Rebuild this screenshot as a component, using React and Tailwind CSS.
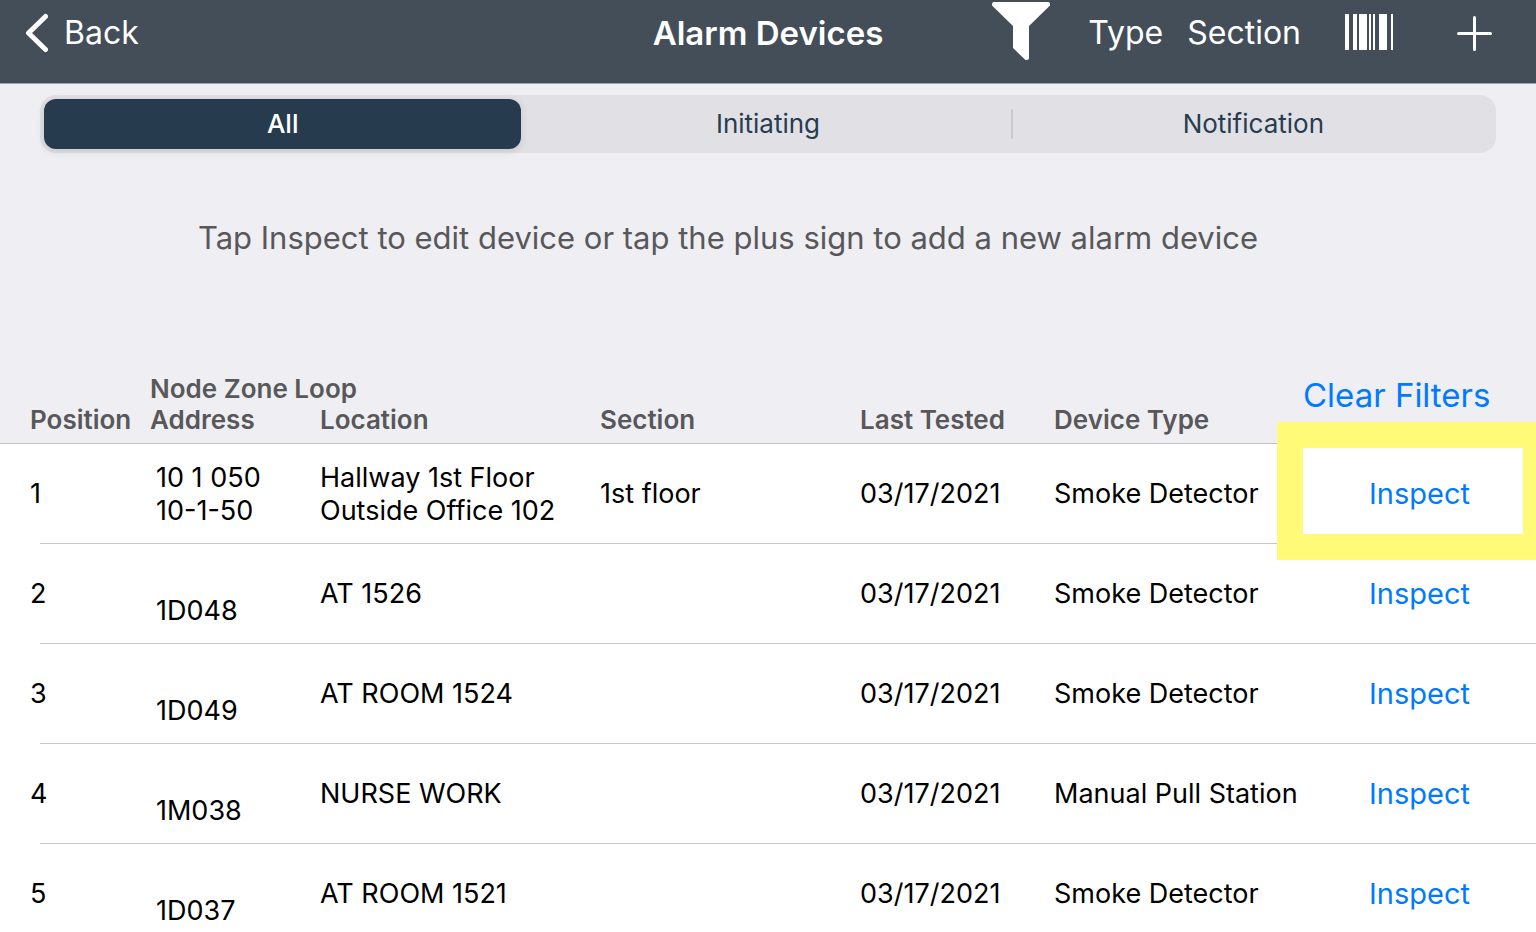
import { useState } from 'react';

const SEGMENTS = ['All', 'Initiating', 'Notification'];

const DEVICES = [
  {
    position: 1,
    node: '10 1 050',
    address: '10-1-50',
    location: 'Hallway 1st Floor Outside Office 102',
    section: '1st floor',
    lastTested: '03/17/2021',
    type: 'Smoke Detector',
    highlighted: true,
  },
  { position: 2, address: '1D048', location: 'AT 1526', lastTested: '03/17/2021', type: 'Smoke Detector' },
  { position: 3, address: '1D049', location: 'AT ROOM 1524', lastTested: '03/17/2021', type: 'Smoke Detector' },
  { position: 4, address: '1M038', location: 'NURSE WORK', lastTested: '03/17/2021', type: 'Manual Pull Station' },
  { position: 5, address: '1D037', location: 'AT ROOM 1521', lastTested: '03/17/2021', type: 'Smoke Detector' },
];

function NavBar() {
  return (
    <header className="grid grid-cols-[1fr_auto_1fr] items-center h-[84px] pb-[17px] bg-[#434e59] border-b border-[#a1a6ad] text-white text-[32px] leading-10">
      <button type="button" className="flex items-center gap-4 pl-6 justify-self-start">
        <svg width="24" height="40" viewBox="0 0 24 40" fill="none" stroke="currentColor" strokeWidth="5" strokeLinecap="round" strokeLinejoin="round">
          <path d="M21.5 3.5 4.5 20 21.5 36.5" />
        </svg>
        Back
      </button>
      <h1 className="text-[33px] font-semibold">Alarm Devices</h1>
      <div className="flex items-center justify-end pr-11">
        <button type="button" aria-label="Filter" className="mr-[38px]">
          <svg width="58" height="62" viewBox="0 0 58 62" fill="currentColor">
            <path d="M2 0H56Q58 0 58 2V3.5L37 24V56Q37 58 35 58H33.5L21 46V24L0 3.5V2Q0 0 2 0Z" />
          </svg>
        </button>
        <button type="button" className="mr-6">Type</button>
        <button type="button" className="mr-11">Section</button>
        <button type="button" aria-label="Scan barcode" className="mr-16">
          <svg width="48" height="38" viewBox="0 0 48 38" fill="currentColor">
            <path d="M0 0h4v36H0zM8 0h4v36H8zM14 0h8v36h-8zM24 0h2v36h-2zM28 0h2v36h-2zM34 0h8v36h-8zM46 0h2v36h-2z" />
          </svg>
        </button>
        <button type="button" aria-label="Add device">
          <svg width="35" height="35" viewBox="0 0 35 35" fill="none" stroke="currentColor" strokeWidth="3" strokeLinecap="round">
            <path d="M17.5 1.5v32M1.5 17.5h32" />
          </svg>
        </button>
      </div>
    </header>
  );
}

function SegmentedControl({ active, onChange }) {
  return (
    <div className="grid grid-cols-3 mx-10 mt-[11px] py-1 rounded-2xl bg-[#e1e0e5] text-[26px] leading-[50px] text-[#283c50]">
      {SEGMENTS.map((name) => (
        <div key={name} className="flex items-center">
          {name === 'Notification' && <span className="w-0.5 h-[30px] -mr-0.5 rounded-full bg-[#cac9cf]" />}
          <button
            type="button"
            aria-pressed={active === name}
            onClick={() => onChange(name)}
            className={
              active === name
                ? 'flex-1 mx-1 rounded-xl bg-[#273b4f] text-white font-medium shadow-[0_2px_8px_rgba(0,0,0,0.12)]'
                : 'flex-1 mx-1 rounded-xl'
            }
          >
            {name}
          </button>
        </div>
      ))}
    </div>
  );
}

function DeviceRow({ device }) {
  return (
    <tr className="h-[100px] bg-[linear-gradient(#c7c7c9,#c7c7c9)] bg-no-repeat bg-[length:100%_1px] bg-[position:left_40px_bottom]">
      <td className="pl-[30px]">{device.position}</td>
      <td className="pl-1.5">
        <div className="h-[33px]">{device.node}</div>
        <div>{device.address}</div>
      </td>
      <td className="pr-4">{device.location}</td>
      <td>{device.section}</td>
      <td>{device.lastTested}</td>
      <td className="whitespace-nowrap">{device.type}</td>
      <td className="relative text-right pr-[66px]">
        {device.highlighted && (
          <span className="absolute z-10 -top-[22px] -bottom-4 -left-[26px] right-0 border-[26px] border-r-[13px] border-[#fffb78] pointer-events-none" />
        )}
        <button type="button" className="text-[29px] text-[#007aff]">Inspect</button>
      </td>
    </tr>
  );
}

export default function App() {
  const [active, setActive] = useState('All');

  return (
    <div className="h-screen overflow-hidden bg-white text-black font-['Inter',sans-serif]">
      <NavBar />

      <div className="bg-[#efeef3] pb-[115px] flow-root">
        <SegmentedControl active={active} onChange={setActive} />
        <p className="mt-[65px] pr-20 text-center text-[31px] leading-10 text-[#58585a]">
          Tap Inspect to edit device or tap the plus sign to add a new alarm device
        </p>
      </div>

      <table className="w-full table-fixed text-left text-[27px] leading-[33px]">
        <colgroup>
          <col className="w-[150px]" />
          <col className="w-[170px]" />
          <col className="w-[280px]" />
          <col className="w-[260px]" />
          <col className="w-[194px]" />
          <col className="w-[249px]" />
          <col />
        </colgroup>
        <thead className="bg-[#efeef3] text-[26px] leading-[31px] text-[#58585a]">
          <tr className="align-bottom border-b border-[#c3c3c6] [&>th]:pb-2 [&>th]:font-semibold">
            <th className="pl-[30px]">Position</th>
            <th className="whitespace-nowrap">
              Node Zone Loop
              <br />
              Address
            </th>
            <th>Location</th>
            <th>Section</th>
            <th>Last Tested</th>
            <th>Device Type</th>
            <th className="text-right pr-[46px]">
              <button type="button" className="mb-5 text-[33px] leading-10 font-normal text-[#007aff] whitespace-nowrap">
                Clear Filters
              </button>
            </th>
          </tr>
        </thead>
        <tbody>
          {DEVICES.map((device) => (
            <DeviceRow key={device.position} device={device} />
          ))}
        </tbody>
      </table>
    </div>
  );
}
